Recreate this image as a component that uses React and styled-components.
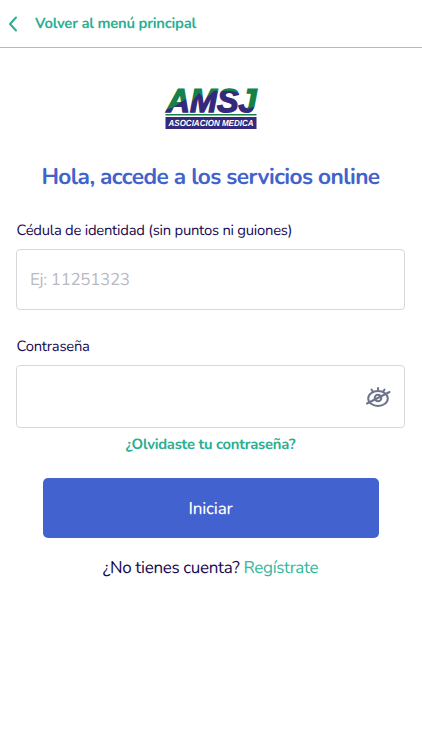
import React from "react";
import styled, { createGlobalStyle } from "styled-components";

const GlobalStyle = createGlobalStyle`
  * {
    box-sizing: border-box;
  }

  body {
    margin: 0;
    background-color: #ffffff;
    font-family: Nunito, Lato, sans-serif;
    color: #170a50;
    text-rendering: geometricPrecision;
  }
`;

const Container = styled.div`
  display: flex;
  flex-direction: column;
  min-height: 100vh;
`;

const Header = styled.header`
  display: flex;
  align-items: center;
  height: 48px;
  padding-left: 8px;
  border-bottom: 1px solid #b0b8e0;
  color: #2bae91;
`;

const BackIcon = styled.svg`
  width: 10px;
  height: 16px;
  margin-right: 17px;
`;

const BackLink = styled.a`
  padding-top: 1px;
  font-size: 14.8px;
  font-weight: 700;
  line-height: 20px;
  letter-spacing: -0.24px;
`;

const Main = styled.main`
  display: flex;
  flex-direction: column;
  align-items: center;
  padding: 38px 17px 0 16px;
`;

const Logo = styled.svg`
  width: 94px;
  height: 46px;
  overflow: visible;
`;

const Title = styled.h1`
  margin: 30px 0 0;
  color: #4262cc;
  font-size: 22.7px;
  font-weight: 700;
  line-height: 32px;
  letter-spacing: -0.57px;
  white-space: nowrap;
`;

const Form = styled.form`
  display: flex;
  flex-direction: column;
  align-items: center;
  width: 100%;
  padding-top: 27px;
`;

const Label = styled.label`
  align-self: flex-start;
  padding-left: 0.5px;
  font-size: 14.8px;
  line-height: 20px;
  letter-spacing: -0.24px;
`;

const InputBox = styled.div`
  display: flex;
  align-items: center;
  width: 100%;
  height: ${({ $height }) => $height};
  margin: ${({ $margin }) => $margin};
  padding: 0 13px;
  border: 1px solid #d8d8dc;
  border-radius: 4px;
`;

const Input = styled.input`
  flex: 1;
  min-width: 0;
  padding: 2px 0 0;
  border: none;
  outline: none;
  background-color: transparent;
  color: #170a50;
  font-family: inherit;
  font-size: 17px;
  letter-spacing: -0.35px;
  text-rendering: inherit;

  &::placeholder {
    color: #b8bac2;
    opacity: 1;
  }
`;

const EyeIcon = styled.svg`
  width: 26px;
  height: 22px;
  color: #6c748a;
`;

const ForgotLink = styled.a`
  color: #2bae91;
  font-size: 14.8px;
  font-weight: 700;
  line-height: 20px;
  letter-spacing: -0.25px;
`;

const Button = styled.button`
  width: 336px;
  height: 60px;
  margin-top: 23px;
  padding: 2px 0 0;
  border: none;
  border-radius: 5px;
  background-color: #4262cf;
  color: #ffffff;
  font-family: inherit;
  font-size: 17px;
  font-weight: 500;
  letter-spacing: -0.2px;
  text-rendering: inherit;
`;

const SignupText = styled.p`
  margin: 19px 0 0;
  font-size: 17px;
  line-height: 24px;
  letter-spacing: -0.33px;
`;

const SignupLink = styled.a`
  color: #35b79c;
`;

function AmsjLogo() {
  return (
    <Logo viewBox="0 0 94 46" role="img" aria-label="AMSJ Asociacion Medica">
      <defs>
        <pattern
          id="hills"
          patternUnits="userSpaceOnUse"
          x="-2"
          y="-6"
          width="100"
          height="44"
        >
          <path d="M0 0H100V44H0Z" fill="#34297b" />
          <path
            d="M0 0H100V24L85 29L81 14L70 11L52 11L43 19L37 13L28 24L24 19L10 28L0 30Z"
            fill="#15804a"
          />
        </pattern>
      </defs>
      <g
        fontFamily="Liberation Sans, sans-serif"
        fontWeight="700"
        fontStyle="italic"
      >
        <text
          x="2.5"
          y="25.5"
          fontSize="33"
          textLength="90"
          lengthAdjust="spacingAndGlyphs"
          fill="url(#hills)"
          stroke="url(#hills)"
          strokeWidth="1.4"
        >
          AMSJ
        </text>
        <path d="M1.5 28.7H92.5" stroke="#15804a" strokeWidth="1.5" />
        <path d="M1.5 31H92.5V43H1.5Z" fill="#34297b" />
        <text
          x="4.5"
          y="40.4"
          fontSize="8.8"
          fill="#ffffff"
          textLength="85"
          lengthAdjust="spacingAndGlyphs"
        >
          ASOCIACION MEDICA
        </text>
      </g>
    </Logo>
  );
}

function App() {
  return (
    <Container>
      <GlobalStyle />
      <Header>
        <BackIcon
          viewBox="0 0 10 16"
          fill="none"
          stroke="currentColor"
          strokeWidth="2"
          strokeLinecap="round"
          strokeLinejoin="round"
        >
          <path d="M8 1.500L2 8L8 14.500" />
        </BackIcon>
        <BackLink>Volver al menú principal</BackLink>
      </Header>
      <Main>
        <AmsjLogo />
        <Title>Hola, accede a los servicios online</Title>
        <Form>
          <Label htmlFor="cedula">Cédula de identidad (sin puntos ni guiones)</Label>
          <InputBox $height="61px" $margin="8px 0 27px">
            <Input id="cedula" type="text" placeholder="Ej: 11251323" />
          </InputBox>
          <Label htmlFor="password">Contraseña</Label>
          <InputBox $height="63px" $margin="8px 0 7px">
            <Input id="password" type="password" />
            <EyeIcon
              viewBox="0 0 26 22"
              fill="none"
              stroke="currentColor"
              strokeWidth="2"
              strokeLinecap="round"
            >
              <ellipse cx="13" cy="12.5" rx="9.8" ry="7.5" />
              <circle cx="13" cy="12" r="3.3" />
              <path d="M2 17.5L24.5 6M13 5V2M8 6L6.500 3.500M18 6L19.500 3.500" />
            </EyeIcon>
          </InputBox>
          <ForgotLink>¿Olvidaste tu contraseña?</ForgotLink>
          <Button type="button">Iniciar</Button>
        </Form>
        <SignupText>
          ¿No tienes cuenta? <SignupLink>Regístrate</SignupLink>
        </SignupText>
      </Main>
    </Container>
  );
}

export default App;
